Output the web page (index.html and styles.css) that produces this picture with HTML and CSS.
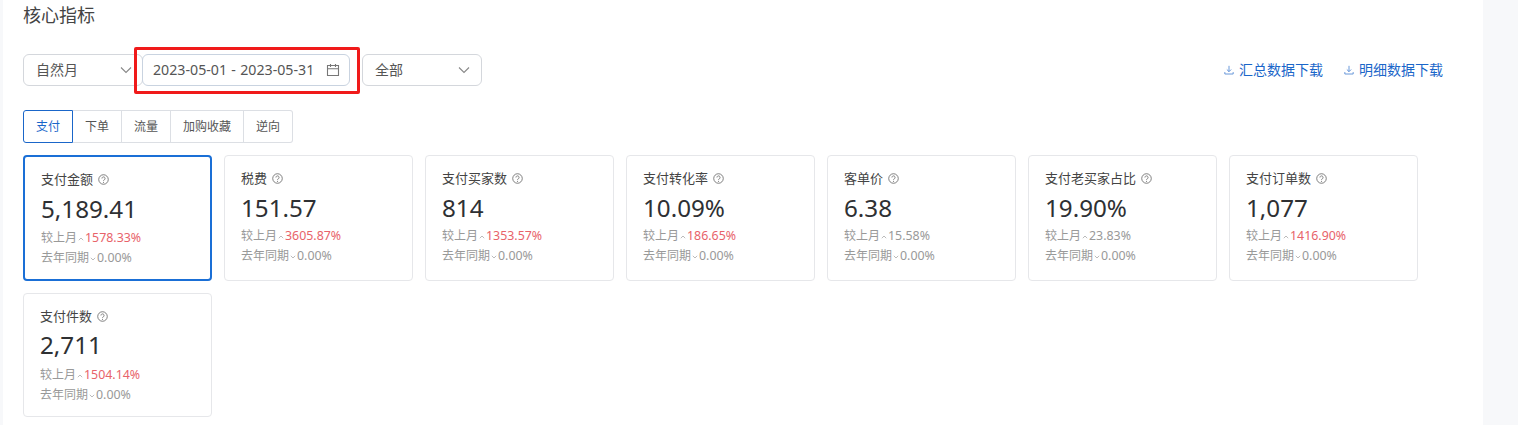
FILE: index.html
```html
<!DOCTYPE html>
<html lang="zh-CN">
<head>
<meta charset="utf-8">
<title>核心指标</title>
<link rel="stylesheet" href="styles.css">
</head>
<body>
<svg class="defs" width="0" height="0" aria-hidden="true">
  <symbol id="help" viewBox="0 0 12 12"><circle cx="6" cy="6" r="5.2" fill="none" stroke="currentColor" stroke-width=".9"/><path d="M4.3 4.9a1.7 1.7 0 1 1 2.6 1.4c-.6.4-.9.6-.9 1.2" fill="none" stroke="currentColor" stroke-width=".9"/><circle cx="6" cy="9" r=".6" fill="currentColor"/></symbol>
  <symbol id="dl" viewBox="0 0 12 12"><path d="M6 1v7M3.4 5.4 6 8l2.6-2.6M1 8.5v2.3h10V8.5" fill="none" stroke="currentColor" stroke-width="1.1"/></symbol>
  <symbol id="chev" viewBox="0 0 12 8"><path d="M1 1.5 6 6.5l5-5" fill="none" stroke="currentColor" stroke-width="1.1"/></symbol>
  <symbol id="caret-up" viewBox="0 0 6 4"><path d="M.8 3.2 3 1l2.2 2.2" fill="none" stroke="currentColor" stroke-width=".8"/></symbol>
  <symbol id="caret-down" viewBox="0 0 6 4"><path d="M.8.8 3 3 5.2.8" fill="none" stroke="currentColor" stroke-width=".8"/></symbol>
</svg>
<main class="panel">
  <h1 class="title">核心指标</h1>
  <div class="toolbar">
    <div class="select sel-a"><span>自然月</span><svg class="chev"><use href="#chev"/></svg></div>
    <div class="date"><span>2023-05-01 - 2023-05-31</span>
      <svg class="cal" viewBox="0 0 14 14"><path d="M1.5 2.5h11v10h-11zM1.5 5.8h11M4.5 1v3M9.5 1v3" fill="none" stroke="currentColor" stroke-width="1.1"/></svg>
    </div>
    <div class="select sel-b"><span>全部</span><svg class="chev"><use href="#chev"/></svg></div>
    <div class="downloads">
      <a class="dl"><svg><use href="#dl"/></svg>汇总数据下载</a>
      <a class="dl"><svg><use href="#dl"/></svg>明细数据下载</a>
    </div>
    <div class="highlight"></div>
  </div>
  <div class="tabs">
    <div class="tab active">支付</div>
    <div class="tab">下单</div>
    <div class="tab">流量</div>
    <div class="tab">加购收藏</div>
    <div class="tab">逆向</div>
  </div>
  <div class="cards">
    <section class="card selected">
      <div class="name">支付金额<svg class="help"><use href="#help"/></svg></div>
      <div class="value">5,189.41</div>
      <div class="cmp">较上月<svg class="caret"><use href="#caret-up"/></svg><b class="up">1578.33%</b></div>
      <div class="cmp">去年同期<svg class="caret"><use href="#caret-down"/></svg><b>0.00%</b></div>
    </section>
    <section class="card">
      <div class="name">税费<svg class="help"><use href="#help"/></svg></div>
      <div class="value">151.57</div>
      <div class="cmp">较上月<svg class="caret"><use href="#caret-up"/></svg><b class="up">3605.87%</b></div>
      <div class="cmp">去年同期<svg class="caret"><use href="#caret-down"/></svg><b>0.00%</b></div>
    </section>
    <section class="card">
      <div class="name">支付买家数<svg class="help"><use href="#help"/></svg></div>
      <div class="value">814</div>
      <div class="cmp">较上月<svg class="caret"><use href="#caret-up"/></svg><b class="up">1353.57%</b></div>
      <div class="cmp">去年同期<svg class="caret"><use href="#caret-down"/></svg><b>0.00%</b></div>
    </section>
    <section class="card">
      <div class="name">支付转化率<svg class="help"><use href="#help"/></svg></div>
      <div class="value">10.09%</div>
      <div class="cmp">较上月<svg class="caret"><use href="#caret-up"/></svg><b class="up">186.65%</b></div>
      <div class="cmp">去年同期<svg class="caret"><use href="#caret-down"/></svg><b>0.00%</b></div>
    </section>
    <section class="card">
      <div class="name">客单价<svg class="help"><use href="#help"/></svg></div>
      <div class="value">6.38</div>
      <div class="cmp">较上月<svg class="caret"><use href="#caret-up"/></svg><b>15.58%</b></div>
      <div class="cmp">去年同期<svg class="caret"><use href="#caret-down"/></svg><b>0.00%</b></div>
    </section>
    <section class="card">
      <div class="name">支付老买家占比<svg class="help"><use href="#help"/></svg></div>
      <div class="value">19.90%</div>
      <div class="cmp">较上月<svg class="caret"><use href="#caret-up"/></svg><b>23.83%</b></div>
      <div class="cmp">去年同期<svg class="caret"><use href="#caret-down"/></svg><b>0.00%</b></div>
    </section>
    <section class="card">
      <div class="name">支付订单数<svg class="help"><use href="#help"/></svg></div>
      <div class="value">1,077</div>
      <div class="cmp">较上月<svg class="caret"><use href="#caret-up"/></svg><b class="up">1416.90%</b></div>
      <div class="cmp">去年同期<svg class="caret"><use href="#caret-down"/></svg><b>0.00%</b></div>
    </section>
    <section class="card short">
      <div class="name">支付件数<svg class="help"><use href="#help"/></svg></div>
      <div class="value">2,711</div>
      <div class="cmp">较上月<svg class="caret"><use href="#caret-up"/></svg><b class="up">1504.14%</b></div>
      <div class="cmp">去年同期<svg class="caret"><use href="#caret-down"/></svg><b>0.00%</b></div>
    </section>
  </div>
</main>
</body>
</html>
```
FILE: styles.css
```css
* { box-sizing: border-box; }
html, body { margin: 0; height: 100%; overflow: hidden; }
body {
  background: #f7f8fa;
  padding: 0 35px 0 3px;
  font-family: "Noto Sans", "Noto Sans CJK SC", sans-serif;
  color: #333;
}
.defs { position: absolute; }
.panel { background: #fff; height: 425px; padding: 0 20px; }
.title { margin: 0; height: 54px; padding-top: 2px; font-size: 18px; line-height: 26px; font-weight: 400; color: #444; }
.toolbar { position: relative; display: flex; height: 32px; font-size: 14px; line-height: 30px; color: #555; }
.select, .date { display: flex; align-items: center; justify-content: space-between; border: 1px solid #d4d7dc; border-radius: 6px; background: #fff; }
.sel-a { width: 120px; padding: 0 10px 0 12px; margin-right: -1px; }
.date { position: relative; width: 208px; padding: 0 9px 0 10px; border-color: #c9d3e0; font-size: 14.2px; word-spacing: .6px; white-space: nowrap; }
.sel-b { width: 120px; margin-left: 12px; padding: 0 11px 0 12px; }
.chev { width: 12px; height: 8px; color: #888; }
.cal { width: 14px; height: 14px; color: #777; }
.downloads { margin-left: auto; display: flex; gap: 21px; padding-right: 20px; }
.dl { display: flex; align-items: center; gap: 5px; font-size: 14px; color: #1a66c9; }
.dl svg { width: 10px; height: 10px; color: #5d8fd6; }
.highlight { position: absolute; left: 111px; top: -7px; width: 226px; height: 47px; border: 3px solid #f01a1a; border-radius: 2px; }
.tabs { display: flex; margin-top: 24px; height: 33px; line-height: 30px; }
.tab { display: flex; align-items: center; justify-content: center; padding: 0 12px; font-size: 12px; color: #555; border: 1px solid #dcdfe4; border-left: 0; background: #fff; }
.tab:first-child { border-radius: 3px 0 0 3px; }
.tab:last-child { border-radius: 0 3px 3px 0; }
.tab.active { color: #1a66c9; border: 1px solid #1a66c9; }
.cards { display: flex; flex-wrap: wrap; gap: 12px; margin-top: 12px; }
.card { width: 189px; height: 126px; padding: 13px 16px 0; border: 1px solid #e6e7ea; border-radius: 4px; background: #fff; }
.card.short { height: 124px; }
.card.short .value { height: 40px; padding-top: 2px; }
.card.selected { border: 2px solid #1a6fd6; }
.card.selected .value { height: 40px; }
.name { display: flex; align-items: center; height: 18px; font-size: 13px; line-height: 18px; color: #444; }
.help { width: 11px; height: 11px; margin-left: 5px; color: #666; }
.value { height: 39px; padding-top: 3px; font-size: 24.2px; line-height: 36px; color: #2e3033; }
.cmp { display: flex; align-items: center; height: 20px; font-size: 12px; line-height: 20px; color: #999; }
.caret { width: 6px; height: 4px; margin: 2px 1px 0 1px; color: #aaa; }
.cmp b { font-weight: 400; font-size: 12.4px; }
.cmp b.up { color: #e8636a; }
```
